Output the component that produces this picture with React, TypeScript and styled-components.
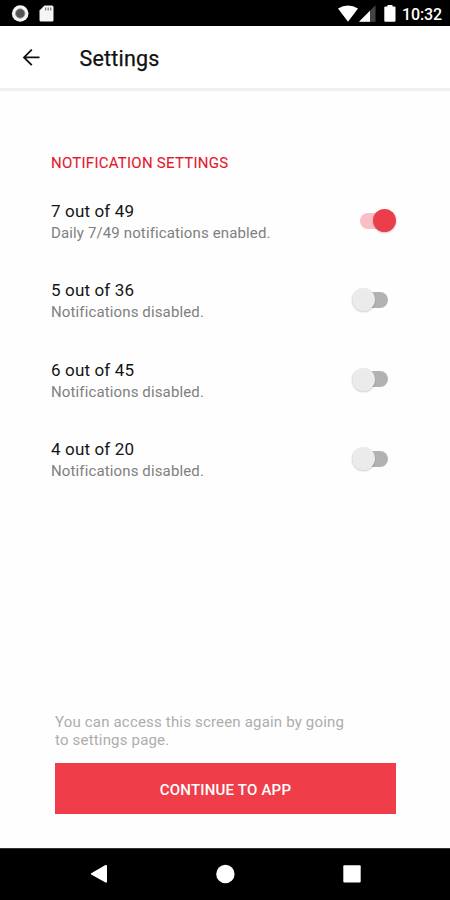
import React from "react";
import styled, { createGlobalStyle } from "styled-components";

const GlobalStyle = createGlobalStyle`
  * { box-sizing: border-box; }
  body { margin: 0; background: #fff; font-family: Roboto, "Liberation Sans", sans-serif; }
`;

const Screen = styled.div`
  display: flex;
  flex-direction: column;
  width: 450px;
  height: 900px;
  overflow: hidden;
  background: #fefefe;
`;

const StatusBar = styled.header`
  display: flex;
  justify-content: space-between;
  flex: 0 0 26px;
  height: 26px;
  min-height: 0;
  background: #000;
  color: #fff;
`;

const StatusGroup = styled.div`
  display: flex;
  align-items: flex-start;
  height: 26px;
`;

const Clock = styled.span`
  width: 48px;
  height: 26px;
  font-size: 16px;
  font-weight: 500;
  line-height: 29px;
  letter-spacing: -0.1px;
`;

const AppBar = styled.div`
  display: flex;
  align-items: center;
  flex: 0 0 65px;
  padding-left: 19px;
  border-bottom: 3px solid #f0f0f0;
  background: #fff;
`;

const BackButton = styled.button`
  display: flex;
  width: 24px;
  height: 24px;
  margin: 0 36.5px 0 0;
  padding: 0;
  border: 0;
  background: none;
`;

const Title = styled.h1`
  margin: 4px 0 0;
  font-size: 21.5px;
  font-weight: 400;
  line-height: 26px;
  letter-spacing: 0.2px;
  color: #111;
  -webkit-text-stroke: 0.25px #111;
`;

const Content = styled.main`
  flex: 1;
  display: flex;
  flex-direction: column;
  padding: 62px 54px 34px 51px;
`;

const SectionTitle = styled.h2`
  margin: 0 0 27px;
  font-size: 15px;
  font-weight: 400;
  line-height: 20px;
  letter-spacing: 0.25px;
  color: #e5182b;
  -webkit-text-stroke: 0.1px #e5182b;
`;

const Options = styled.div`
  display: flex;
  flex-direction: column;
`;

const Option = styled.div`
  display: flex;
  justify-content: space-between;
  height: 79.4px;
`;

const OptionTitle = styled.div`
  font-size: 17px;
  line-height: 22px;
  letter-spacing: 0.15px;
  color: #151515;
`;

const OptionText = styled.div`
  font-size: 15px;
  line-height: 22px;
  letter-spacing: 0.13px;
  color: #808080;
`;

const Toggle = styled.div<{ $on: boolean }>`
  display: flex;
  align-items: center;
  width: 36px;
  height: 16px;
  margin: 12.5px ${({ $on }) => ($on ? 0 : 8)}px 0 0;
  border-radius: 8px;
  justify-content: ${({ $on }) => ($on ? "flex-end" : "flex-start")};
  background: ${({ $on }) =>
    $on ? "#fabfc6" : "#b2b2b2"};
`;

const Knob = styled.span<{ $on: boolean }>`
  width: 23px;
  height: 23px;
  flex-shrink: 0;
  border-radius: 50%;
  background: ${({ $on }) => ($on ? "#ec3e4a" : "#ebebeb")};
  box-shadow: 0 1px 2px rgba(0, 0, 0, 0.2);
`;

const Footer = styled.div`
  display: flex;
  flex-direction: column;
  margin: auto 0 0 4px;
`;

const Hint = styled.p`
  width: 300px;
  margin: 0 0 14px;
  font-size: 15px;
  line-height: 18px;
  letter-spacing: 0.18px;
  color: #adadad;
`;

const ContinueButton = styled.button`
  height: 51px;
  padding: 3px 0 0;
  border: 0;
  background: #ef3e4a;
  color: #fff;
  font-family: inherit;
  font-size: 15px;
  font-weight: 500;
  letter-spacing: 0.2px;
`;

const NavBar = styled.nav`
  flex: 0 0 52px;
  display: flex;
  align-items: center;
  justify-content: space-between;
  padding: 0 89px 1px 90px;
  background: #000;
  border-top: 1px solid #333;
`;

const options = [
  { title: "7 out of 49", text: "Daily 7/49 notifications enabled.", on: true },
  { title: "5 out of 36", text: "Notifications disabled.", on: false },
  { title: "6 out of 45", text: "Notifications disabled.", on: false },
  { title: "4 out of 20", text: "Notifications disabled.", on: false },
];

export default function App() {
  return (
    <Screen>
      <GlobalStyle />
      <StatusBar>
        <StatusGroup>
          <svg width="60" height="26" viewBox="0 0 60 26">
            <circle cx="20.2" cy="13.5" r="8.3" fill="#f5f5f5" />
            <circle cx="20.2" cy="13.5" r="4.7" fill="#555" stroke="#999" strokeWidth="0.8" />
            <path d="M44.5 5.5h7.5q1.5 0 1.5 1.5v13q0 1.5-1.5 1.5H41q-1.5 0-1.5-1.5v-9.5z" fill="#f5f5f5" />
            <path d="M45.7 7.5v3M48.2 7.5v3M50.7 7.5v3" stroke="#777" strokeWidth="1.2" />
          </svg>
        </StatusGroup>
        <StatusGroup>
          <svg width="64" height="26" viewBox="0 0 64 26">
            <path d="M0 8.5Q10 2.5 20 8.5L10 21.8z" fill="#fff" />
            <path d="M37.5 5.3v16.4H21z" fill="#444" />
            <path d="M32 10.8v10.9H21z" fill="#fff" />
            <path d="M49.5 5h5v1.5h2q1 0 1 1v13.2q0 1-1 1h-9.200q-1 0-1-1V7.500q0-1 1-1h2.200z" fill="#fff" />
          </svg>
          <Clock>10:32</Clock>
        </StatusGroup>
      </StatusBar>
      <AppBar>
        <BackButton aria-label="Back">
          <svg width="24" height="24" viewBox="0 0 24 24" fill="none" stroke="#111" strokeWidth="1.8">
            <path d="M20.500 12.400H5M12.800 4.600L5 12.400l7.800 7.800" />
          </svg>
        </BackButton>
        <Title>Settings</Title>
      </AppBar>
      <Content>
        <SectionTitle>NOTIFICATION SETTINGS</SectionTitle>
        <Options>
          {options.map(({ title, text, on }) => (
            <Option key={title}>
              <div>
                <OptionTitle>{title}</OptionTitle>
                <OptionText>{text}</OptionText>
              </div>
              <Toggle $on={on} role="switch" aria-checked={on} aria-label={title}>
                <Knob $on={on} />
              </Toggle>
            </Option>
          ))}
        </Options>
        <Footer>
          <Hint>You can access this screen again by going to settings page.</Hint>
          <ContinueButton>CONTINUE TO APP</ContinueButton>
        </Footer>
      </Content>
      <NavBar>
        <svg width="18" height="20" viewBox="0 0 18 20">
          <path d="M1.200 9.200L15.500 1q1.500-.5 1.500 1v15.500q0 1.500-1.500 1L1.200 10.400q-.8-.6 0-1.200z" fill="#fff" />
        </svg>
        <svg width="20" height="20" viewBox="0 0 20 20">
          <circle cx="9.400" cy="10" r="9.200" fill="#fff" />
        </svg>
        <svg width="18" height="20" viewBox="0 0 18 20">
          <rect x="0.300" y="1.200" width="17.400" height="17.400" rx="1" fill="#fff" />
        </svg>
      </NavBar>
    </Screen>
  );
}
